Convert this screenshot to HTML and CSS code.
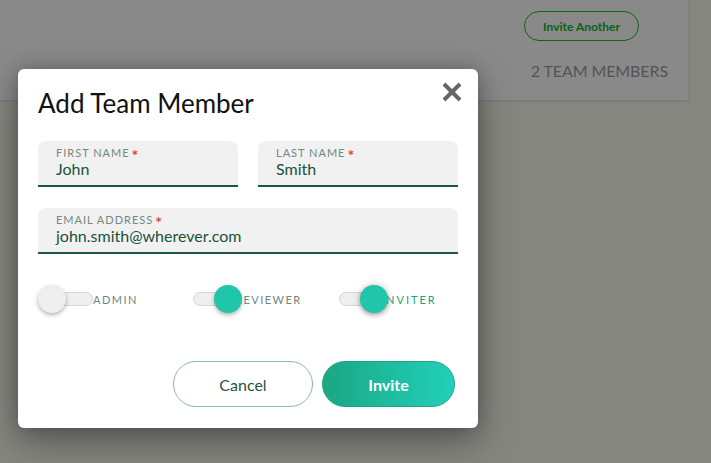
FILE: index.html
```html
<!DOCTYPE html>
<html lang="en">
<head>
    <meta charset="UTF-8">
    <meta name="viewport" content="width=device-width, initial-scale=1.0">
    <title>Add Team Member</title>
    <link rel="stylesheet" href="styles.css">
</head>
<body>

    <div class="team-card">
        <button class="invite-another">Invite Another</button>
        <div class="member-count">2 TEAM MEMBERS</div>
    </div>

    <div class="modal">
        <h2 class="modal-title">Add Team Member</h2>
        <button class="close-btn" aria-label="Close">
            <svg width="20" height="20" viewBox="0 0 20 20">
                <path d="M2 2 L18 18 M18 2 L2 18" stroke="#666" stroke-width="4" stroke-linecap="butt" fill="none"/>
            </svg>
        </button>

        <div class="field-row two">
            <div class="field">
                <label>FIRST NAME<span class="req">*</span></label>
                <div class="value">John</div>
            </div>
            <div class="field">
                <label>LAST NAME<span class="req">*</span></label>
                <div class="value">Smith</div>
            </div>
        </div>

        <div class="field-row">
            <div class="field">
                <label>EMAIL ADDRESS<span class="req">*</span></label>
                <div class="value">john.smith@wherever.com</div>
            </div>
        </div>

        <div class="roles">
            <div class="toggle">
                <span class="track"><span class="knob"></span></span>
                <span class="toggle-label">ADMIN</span>
            </div>
            <div class="toggle on">
                <span class="track"><span class="knob"></span></span>
                <span class="toggle-label">REVIEWER</span>
            </div>
            <div class="toggle on focused">
                <span class="track"><span class="knob"></span></span>
                <span class="toggle-label">INVITER</span>
            </div>
        </div>

        <div class="actions">
            <button class="btn btn-cancel">Cancel</button>
            <button class="btn btn-invite">Invite</button>
        </div>
    </div>

</body>
</html>
```

FILE: styles.css
```css
/* Page behind the dimmed overlay */
body {
    margin: 0;
    font-family: "Lato", "Open Sans", sans-serif;
    background-color: #868681;
    height: 463px;
    overflow: hidden;
    position: relative;
}
button {
    font-family: inherit;
    cursor: pointer;
}
.team-card {
    width: 688px;
    height: 100px;
    box-sizing: border-box;
    padding: 11px 20px 0 0;
    background-color: #898989;
    box-shadow: 0 1px 2px rgba(0,0,0,0.12);
    display: flex;
    flex-direction: column;
    align-items: flex-end;
}
.invite-another {
    margin-right: 29px;
    width: 115px;
    height: 30px;
    border: 1px solid #0e650f;
    border-radius: 15px;
    background: transparent;
    color: #0b620d;
    font-size: 12px;
    font-weight: bold;
    padding: 0;
}
.member-count {
    margin-top: 20px;
    font-size: 16px;
    color: #545456;
    letter-spacing: -0.1px;
}

/* Modal */
.modal {
    position: absolute;
    left: 18px;
    top: 69px;
    width: 460px;
    box-sizing: border-box;
    padding: 19px 20px 21px 20px;
    background-color: #ffffff;
    border-radius: 6px;
    box-shadow: 0 14px 36px rgba(0,0,0,0.35), 0 0 18px rgba(0,0,0,0.2);
}
.modal-title {
    margin: 0;
    font-size: 26px;
    font-weight: normal;
    line-height: 30px;
    color: #111;
}
.close-btn {
    position: absolute;
    top: 13px;
    right: 16px;
    border: none;
    background: none;
    padding: 0;
    width: 20px;
    height: 20px;
}
.close-btn svg {
    display: block;
}
.field-row {
    margin-top: 21px;
}
.field-row.two {
    margin-top: 23px;
    display: grid;
    grid-template-columns: 200px 200px;
    column-gap: 20px;
}
.field {
    background-color: #f1f1f1;
    border-radius: 8px 8px 0 0;
    border-bottom: 2px solid #1b5842;
    padding: 5px 18px 7px 18px;
}
.field label {
    display: block;
    font-size: 11px;
    line-height: 13px;
    letter-spacing: 1px;
    color: #74897f;
}
.req {
    display: inline-block;
    color: #d64545;
    font-size: 16px;
    font-weight: bold;
    line-height: 0;
    vertical-align: -4px;
    margin-left: 2px;
}
.field .value {
    font-size: 16px;
    line-height: 19px;
    color: #19513d;
}

/* Role toggles */
.roles {
    margin-top: 31px;
    display: grid;
    grid-template-columns: 140px 146px 1fr;
    height: 28px;
}
.toggle {
    display: flex;
    align-items: center;
    padding-left: 15px;
}
.track {
    position: relative;
    width: 40px;
    height: 14px;
    box-sizing: border-box;
    border: 1px solid #d6d6d6;
    border-radius: 7px;
    background-color: #efefef;
}
.knob {
    position: absolute;
    left: -16px;
    top: -8px;
    width: 28px;
    height: 28px;
    border-radius: 50%;
    background-color: #eeeeee;
    box-shadow: 0 2px 4px rgba(0,0,0,0.3);
}
.toggle.on .knob {
    left: 20px;
    background-color: #1fc6aa;
}
.toggle.focused .knob {
    box-shadow: 0 2px 4px rgba(0,0,0,0.3), 0 0 10px rgba(0,0,0,0.18);
}
.toggle-label {
    font-size: 11px;
    letter-spacing: 1.5px;
    color: #6e877e;
}
.toggle.on .toggle-label {
    margin-left: 2px;
}
.toggle.focused .toggle-label {
    color: #17a67a;
    letter-spacing: 2px;
}

/* Buttons */
.actions {
    margin-top: 48px;
    margin-right: 3px;
    display: flex;
    justify-content: flex-end;
    gap: 9px;
}
.btn {
    height: 46px;
    border-radius: 23px;
    font-size: 16px;
    padding: 0;
}
.btn-cancel {
    width: 140px;
    background-color: #fff;
    border: 1px solid #8cb8aa;
    color: #1f553f;
}
.btn-invite {
    width: 133px;
    border: 1px solid #1aa585;
    background: linear-gradient(to right, #1aa784, #22d0b9);
    color: #fff;
    font-weight: bold;
}
```
